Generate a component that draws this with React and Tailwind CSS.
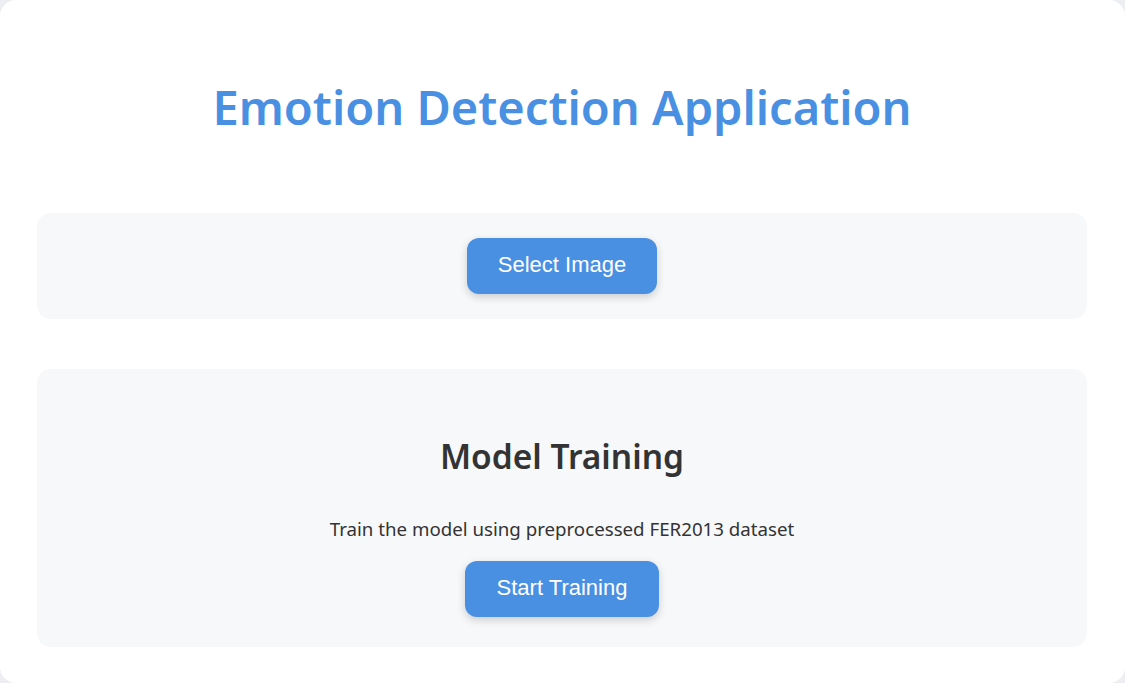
import React from 'react';

const Button = ({ children, className = '' }) => (
  <button
    type="button"
    className={`h-[56px] pb-[3px] rounded-[12px] bg-[#4a90e2] text-white text-[22px] shadow-[0_3px_8px_rgba(0,0,0,0.18)] ${className}`}
    style={{ fontFamily: '"Liberation Sans", Arial, sans-serif' }}
  >
    {children}
  </button>
);

export default function App() {
  return (
    <div className="w-full h-[683px] bg-[#eceef1]">
      <div
        className="h-full bg-white rounded-[16px] pl-[37px] pr-[38px] flex flex-col"
        style={{ fontFamily: '"Noto Sans", "Open Sans", sans-serif' }}
      >
        <h1 className="mt-[79px] text-center text-[47px] leading-[56px] font-semibold text-[#4a90e2]">
          Emotion Detection Application
        </h1>

        {/* Image upload */}
        <div className="mt-[78px] h-[106px] rounded-[14px] bg-[#f7f8fa] flex items-center justify-center">
          <Button className="w-[190px]">Select Image</Button>
        </div>

        {/* Training */}
        <div className="mt-[50px] h-[278px] rounded-[14px] bg-[#f7f8fa] flex flex-col items-center pt-[65px]">
          <h2 className="text-[33.5px] leading-[44px] font-semibold text-[#333]">Model Training</h2>
          <p className="mt-[37px] text-[18.7px] leading-[27px] text-[#333]">
            Train the model using preprocessed FER2013 dataset
          </p>
          <Button className="mt-[19px] w-[194px]">Start Training</Button>
        </div>
      </div>
    </div>
  );
}
